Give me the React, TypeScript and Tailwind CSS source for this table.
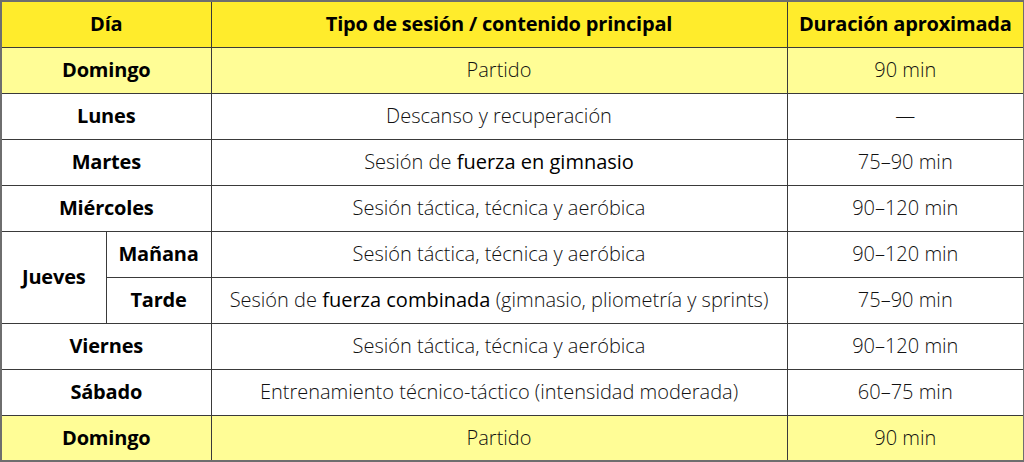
import React from "react";

const cell = "border border-[#3a3a3a] text-center align-middle p-0 whitespace-nowrap";

export default function App() {
  const bold = "font-bold text-black tracking-[-0.2px]";
  const light = "font-light text-[#111]";
  const med = "font-medium text-black";
  return (
    <div className="w-[1024px] h-[462px] bg-white" style={{ fontFamily: "'Open Sans', 'Noto Sans', sans-serif" }}>
      <table className="w-[1023px] border-collapse text-[20px] leading-none border-2 border-[#6e6e6e] table-fixed">
        <colgroup>
          <col className="w-[105px]" />
          <col className="w-[105px]" />
          <col className="w-[576px]" />
          <col className="w-[237px]" />
        </colgroup>
        <tbody>
          <tr className="h-[46px] bg-[#ffec2c]">
            <td colSpan={2} className={`${cell} ${bold}`}>Día</td>
            <td className={`${cell} ${bold}`}>Tipo de sesión / contenido principal</td>
            <td className={`${cell} ${bold}`}>Duración aproximada</td>
          </tr>
          <tr className="h-[46px] bg-[#fffd96]">
            <td colSpan={2} className={`${cell} ${bold}`}>Domingo</td>
            <td className={`${cell} ${light}`}>Partido</td>
            <td className={`${cell} ${light}`}>90 min</td>
          </tr>
          <tr className="h-[46px]">
            <td colSpan={2} className={`${cell} ${bold}`}>Lunes</td>
            <td className={`${cell} ${light}`}>Descanso y recuperación</td>
            <td className={`${cell} ${light}`}>—</td>
          </tr>
          <tr className="h-[46px]">
            <td colSpan={2} className={`${cell} ${bold}`}>Martes</td>
            <td className={`${cell} ${light}`}>Sesión de <span className={med}>fuerza en gimnasio</span></td>
            <td className={`${cell} ${light}`}>75–90 min</td>
          </tr>
          <tr className="h-[46px]">
            <td colSpan={2} className={`${cell} ${bold}`}>Miércoles</td>
            <td className={`${cell} ${light}`}>Sesión táctica, técnica y aeróbica</td>
            <td className={`${cell} ${light}`}>90–120 min</td>
          </tr>
          <tr className="h-[46px]">
            <td rowSpan={2} className={`${cell} ${bold}`}>Jueves</td>
            <td className={`${cell} ${bold}`}>Mañana</td>
            <td className={`${cell} ${light}`}>Sesión táctica, técnica y aeróbica</td>
            <td className={`${cell} ${light}`}>90–120 min</td>
          </tr>
          <tr className="h-[46px]">
            <td className={`${cell} ${bold}`}>Tarde</td>
            <td className={`${cell} ${light}`}>Sesión de <span className={med}>fuerza combinada</span> (gimnasio, pliometría y sprints)</td>
            <td className={`${cell} ${light}`}>75–90 min</td>
          </tr>
          <tr className="h-[46px]">
            <td colSpan={2} className={`${cell} ${bold}`}>Viernes</td>
            <td className={`${cell} ${light}`}>Sesión táctica, técnica y aeróbica</td>
            <td className={`${cell} ${light}`}>90–120 min</td>
          </tr>
          <tr className="h-[46px]">
            <td colSpan={2} className={`${cell} ${bold}`}>Sábado</td>
            <td className={`${cell} ${light}`}>Entrenamiento técnico-táctico (intensidad moderada)</td>
            <td className={`${cell} ${light}`}>60–75 min</td>
          </tr>
          <tr className="h-[46px] bg-[#fffd96]">
            <td colSpan={2} className={`${cell} ${bold}`}>Domingo</td>
            <td className={`${cell} ${light}`}>Partido</td>
            <td className={`${cell} ${light}`}>90 min</td>
          </tr>
        </tbody>
      </table>
    </div>
  );
}
